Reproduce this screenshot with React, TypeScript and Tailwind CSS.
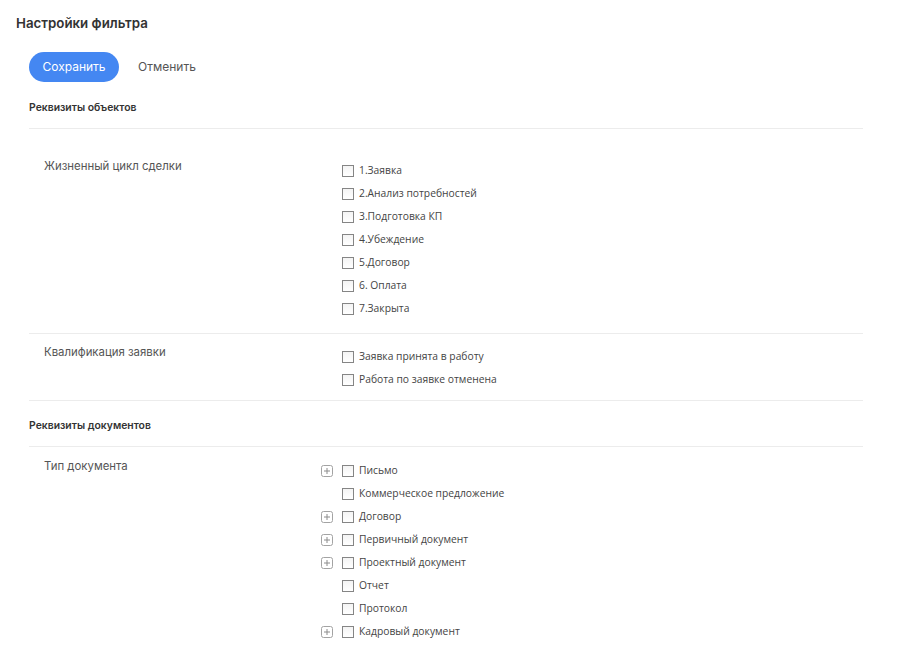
import React from "react";

type Item = { label: string; expandable?: boolean };

const lifecycle: Item[] = [
  { label: "1.Заявка" },
  { label: "2.Анализ потребностей" },
  { label: "3.Подготовка КП" },
  { label: "4.Убеждение" },
  { label: "5.Договор" },
  { label: "6. Оплата" },
  { label: "7.Закрыта" },
];

const qualification: Item[] = [
  { label: "Заявка принята в работу" },
  { label: "Работа по заявке отменена" },
];

const docTypes: Item[] = [
  { label: "Письмо", expandable: true },
  { label: "Коммерческое предложение" },
  { label: "Договор", expandable: true },
  { label: "Первичный документ", expandable: true },
  { label: "Проектный документ", expandable: true },
  { label: "Отчет" },
  { label: "Протокол" },
  { label: "Кадровый документ", expandable: true },
];

const PlusBox = () => (
  <svg width="12" height="12" viewBox="0 0 12 12" className="block">
    <rect x="0.5" y="0.5" width="11" height="11" rx="2" fill="#fff" stroke="#a3a3a3" />
    <path d="M3 6h6M6 3v6" stroke="#8c8c8c" strokeWidth="1" />
  </svg>
);

const CheckList = ({ items }: { items: Item[] }) => (
  <div className="flex flex-col">
    {items.map((item) => (
      <div key={item.label} className="flex items-center h-[23px]">
        <div className="w-[21px] flex items-center">{item.expandable && <PlusBox />}</div>
        <span className="w-3 h-3 border border-[#858585] bg-gradient-to-b from-[#f4f4f4] to-white" />
        <span className="ml-[5px] text-[10.3px] text-[#444] font-['Open_Sans',sans-serif]">
          {item.label}
        </span>
      </div>
    ))}
  </div>
);

const FieldRow = ({
  label,
  items,
  className,
}: {
  label: string;
  items: Item[];
  className?: string;
}) => (
  <div className={"flex " + (className ?? "")}>
    <div className="w-[292px] pl-[15px] text-[11.4px] leading-4 text-[#555] -mt-[1px]">{label}</div>
    <CheckList items={items} />
  </div>
);

const SectionHeader = ({ title }: { title: string }) => (
  <div className="text-[10.4px] font-semibold text-[#333] h-[40px] pt-[11px] border-b border-[#ececec]">
    {title}
  </div>
);

export default function App() {
  return (
    <div className="w-[900px] h-[655px] overflow-hidden bg-white font-['Inter',sans-serif]">
      <h1 className="pl-4 pt-[14px] text-[13.3px] font-semibold text-[#333] leading-[18px]">
        Настройки фильтра
      </h1>
      <div className="pl-[29px] w-[863px]">
        <div className="flex items-center mt-[20px] gap-[19px]">
          <button className="h-[30px] w-[90px] rounded-full bg-[#4487f2] text-white text-[12px]">
            Сохранить
          </button>
          <button className="text-[12px] text-[#555]">Отменить</button>
        </div>
        <div className="mt-[7px]">
          <SectionHeader title="Реквизиты объектов" />
        </div>
        <div className="border-b border-[#ececec]">
          <FieldRow label="Жизненный цикл сделки" items={lifecycle} className="pt-[30px] pb-[13px]" />
        </div>
        <div className="border-b border-[#ececec]">
          <FieldRow label="Квалификация заявки" items={qualification} className="pt-[11px] pb-[9px]" />
        </div>
        <div className="mt-[6px]">
          <SectionHeader title="Реквизиты документов" />
        </div>
        <FieldRow label="Тип документа" items={docTypes} className="pt-[12px]" />
      </div>
    </div>
  );
}
